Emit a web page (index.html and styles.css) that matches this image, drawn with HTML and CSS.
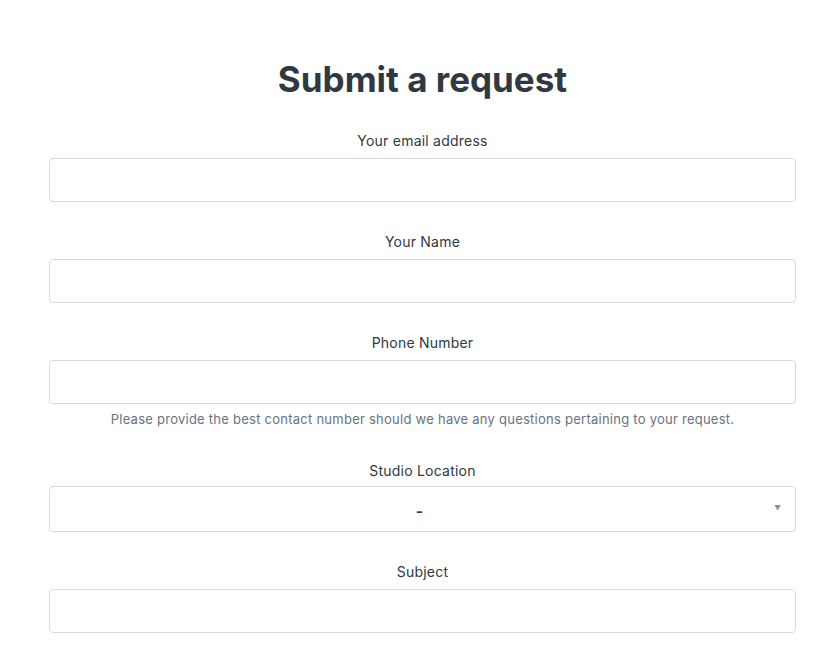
FILE: index.html
```html
<!DOCTYPE html>
<html>
<head>
<meta charset="utf-8">
<link rel="stylesheet" href="styles.css">
</head>
<body>
<div class="page">
  <h1 class="title">Submit a request</h1>
  <form class="form">
    <div class="field">
      <label class="label">Your email address</label>
      <input class="input" type="text">
    </div>
    <div class="field">
      <label class="label">Your Name</label>
      <input class="input" type="text">
    </div>
    <div class="field">
      <label class="label">Phone Number</label>
      <input class="input" type="text">
      <p class="hint">Please provide the best contact number should we have any questions pertaining to your request.</p>
    </div>
    <div class="field">
      <label class="label">Studio Location</label>
      <div class="select">
        <span class="select-value">-</span>
        <span class="select-arrow">▼</span>
      </div>
    </div>
    <div class="field">
      <label class="label">Subject</label>
      <input class="input" type="text">
    </div>
  </form>
</div>
</body>
</html>
```
FILE: styles.css
```css
html, body {
  margin: 0;
  padding: 0;
  background: #fff;
}
body {
  font-family: Inter, "Liberation Sans", Arial, sans-serif;
  color: #2f3941;
}
.page {
  padding: 0 38px 0 49px;
}
.title {
  margin: 0;
  padding-top: 58px;
  font-size: 35px;
  line-height: 42px;
  font-weight: 700;
  letter-spacing: 0;
  text-align: center;
  color: #2f3941;
}
.form {
  margin-top: 31px;
  display: flex;
  flex-direction: column;
  gap: 30px;
}
.field {
  display: flex;
  flex-direction: column;
}
.label {
  display: block;
  text-align: center;
  font-size: 14px;
  line-height: 20px;
  letter-spacing: 0.22px;
  margin-bottom: 7px;
}
.input {
  display: block;
  box-sizing: border-box;
  width: 100%;
  height: 44px;
  border: 1px solid #d8dcde;
  border-radius: 4px;
  background: #fff;
  margin: 0;
  padding: 0 12px;
}
.hint {
  margin: 5px 0 2px;
  text-align: center;
  font-size: 13px;
  line-height: 20px;
  letter-spacing: 0.25px;
  color: #68737d;
}
.select {
  box-sizing: border-box;
  height: 46px;
  margin-top: -2px;
  border: 1px solid #d8dcde;
  border-radius: 4px;
  display: flex;
  align-items: center;
  position: relative;
  padding-right: 6px;
}
.select-value {
  flex: 1;
  text-align: center;
  font-size: 16px;
  font-weight: 600;
  padding-top: 4px;
  color: #2f3941;
}
.select-arrow {
  position: absolute;
  right: 14px;
  top: 17px;
  font-size: 7px;
  color: #87929d;
}
```
